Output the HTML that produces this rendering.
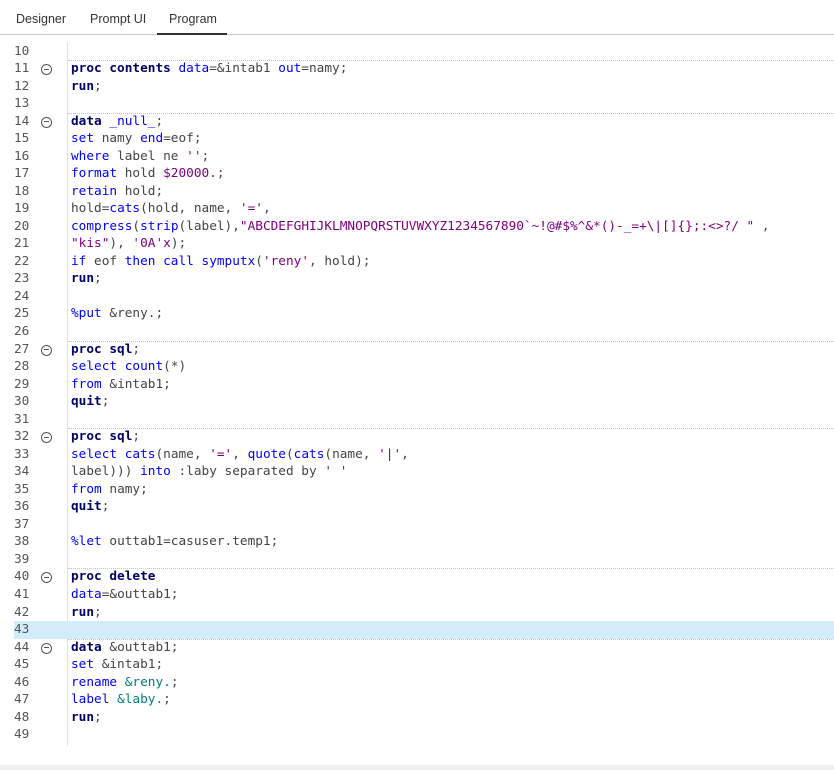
<!DOCTYPE html>
<html><head><meta charset="utf-8"><style>
*{margin:0;padding:0;box-sizing:border-box}
body{width:834px;height:770px;background:#fff;position:relative;overflow:hidden;font-family:"Liberation Sans",sans-serif}
.tabs{position:absolute;top:0;left:0;width:834px;height:35px;border-bottom:1px solid #c8c8c8}
.tab{position:absolute;top:12px;font-size:12.5px;color:#333}
.ul{position:absolute;left:157px;top:33px;width:70px;height:2px;background:#333}
.ed{position:absolute;top:42.5px;left:0;width:834px}
.ln{position:relative;height:17.54px;line-height:17.54px;font-family:"DejaVu Sans Mono","Liberation Mono",monospace;font-size:12.75px;white-space:pre;color:#444}
.num{position:absolute;left:14px;width:40px;color:#555}
.code{position:absolute;left:71px}
.sep:before{content:"";position:absolute;left:68px;right:0;top:0;border-top:1px dotted #c4c4c4}
.fold{position:absolute;left:41px;top:4px;width:11px;height:11px;border:1.3px solid #555;border-radius:50%}
.fold:after{content:"";position:absolute;left:2px;top:3.5px;width:4.5px;height:1.3px;background:#555}
.hl{background:#d3ecfb;margin-left:14px}
.hl .num{left:0}
.gut{position:absolute;left:67px;top:42px;width:1px;height:704px;background:#e0e0e0}
.k{color:#020266;font-weight:bold}.b{color:#0000ff}.s{color:#800080}.m{color:#008080}
.foot{position:absolute;left:0;top:765px;width:834px;height:5px;background:#f0f0f0}
</style></head><body>
<div class="tabs"><span class="tab" style="left:16px">Designer</span><span class="tab" style="left:90px">Prompt UI</span><span class="tab" style="left:169px">Program</span><div class="ul"></div></div>
<div class="gut"></div>
<div class="ed">
<div class="ln"><span class="num">10</span></div>
<div class="ln sep"><span class="num">11</span><span class="fold"></span><span class="code"><span class="k">proc contents</span> <span class="b">data</span>=&amp;intab1 <span class="b">out</span>=namy;</span></div>
<div class="ln"><span class="num">12</span><span class="code"><span class="k">run</span>;</span></div>
<div class="ln"><span class="num">13</span></div>
<div class="ln sep"><span class="num">14</span><span class="fold"></span><span class="code"><span class="k">data</span> <span class="b">_null_</span>;</span></div>
<div class="ln"><span class="num">15</span><span class="code"><span class="b">set</span> namy <span class="b">end</span>=eof;</span></div>
<div class="ln"><span class="num">16</span><span class="code"><span class="b">where</span> label ne <span class="s">''</span>;</span></div>
<div class="ln"><span class="num">17</span><span class="code"><span class="b">format</span> hold <span class="s">$20000.</span>;</span></div>
<div class="ln"><span class="num">18</span><span class="code"><span class="b">retain</span> hold;</span></div>
<div class="ln"><span class="num">19</span><span class="code">hold=<span class="b">cats</span>(hold, name, <span class="s">'='</span>,</span></div>
<div class="ln"><span class="num">20</span><span class="code"><span class="b">compress</span>(<span class="b">strip</span>(label),<span class="s">"ABCDEFGHIJKLMNOPQRSTUVWXYZ1234567890`~!@#$%^&amp;*()-_=+\|[]{};:&lt;&gt;?/ "</span> ,</span></div>
<div class="ln"><span class="num">21</span><span class="code"><span class="s">"kis"</span>), <span class="s">'0A'x</span>);</span></div>
<div class="ln"><span class="num">22</span><span class="code"><span class="b">if</span> eof <span class="b">then call</span> <span class="b">symputx</span>(<span class="s">'reny'</span>, hold);</span></div>
<div class="ln"><span class="num">23</span><span class="code"><span class="k">run</span>;</span></div>
<div class="ln"><span class="num">24</span></div>
<div class="ln"><span class="num">25</span><span class="code"><span class="b">%put</span> &amp;reny.;</span></div>
<div class="ln"><span class="num">26</span></div>
<div class="ln sep"><span class="num">27</span><span class="fold"></span><span class="code"><span class="k">proc sql</span>;</span></div>
<div class="ln"><span class="num">28</span><span class="code"><span class="b">select</span> <span class="b">count</span>(*)</span></div>
<div class="ln"><span class="num">29</span><span class="code"><span class="b">from</span> &amp;intab1;</span></div>
<div class="ln"><span class="num">30</span><span class="code"><span class="k">quit</span>;</span></div>
<div class="ln"><span class="num">31</span></div>
<div class="ln sep"><span class="num">32</span><span class="fold"></span><span class="code"><span class="k">proc sql</span>;</span></div>
<div class="ln"><span class="num">33</span><span class="code"><span class="b">select</span> <span class="b">cats</span>(name, <span class="s">'='</span>, <span class="b">quote</span>(<span class="b">cats</span>(name, <span class="s">'|'</span>,</span></div>
<div class="ln"><span class="num">34</span><span class="code">label))) <span class="b">into</span> :laby separated by <span class="s">' '</span></span></div>
<div class="ln"><span class="num">35</span><span class="code"><span class="b">from</span> namy;</span></div>
<div class="ln"><span class="num">36</span><span class="code"><span class="k">quit</span>;</span></div>
<div class="ln"><span class="num">37</span></div>
<div class="ln"><span class="num">38</span><span class="code"><span class="b">%let</span> outtab1=casuser.temp1;</span></div>
<div class="ln"><span class="num">39</span></div>
<div class="ln sep"><span class="num">40</span><span class="fold"></span><span class="code"><span class="k">proc delete</span></span></div>
<div class="ln"><span class="num">41</span><span class="code"><span class="b">data</span>=&amp;outtab1;</span></div>
<div class="ln"><span class="num">42</span><span class="code"><span class="k">run</span>;</span></div>
<div class="ln hl"><span class="num">43</span></div>
<div class="ln sep"><span class="num">44</span><span class="fold"></span><span class="code"><span class="k">data</span> &amp;outtab1;</span></div>
<div class="ln"><span class="num">45</span><span class="code"><span class="b">set</span> &amp;intab1;</span></div>
<div class="ln"><span class="num">46</span><span class="code"><span class="b">rename</span> <span class="m">&amp;reny.</span>;</span></div>
<div class="ln"><span class="num">47</span><span class="code"><span class="b">label</span> <span class="m">&amp;laby.</span>;</span></div>
<div class="ln"><span class="num">48</span><span class="code"><span class="k">run</span>;</span></div>
<div class="ln"><span class="num">49</span></div>
</div>
<div class="foot"></div>
</body></html>
